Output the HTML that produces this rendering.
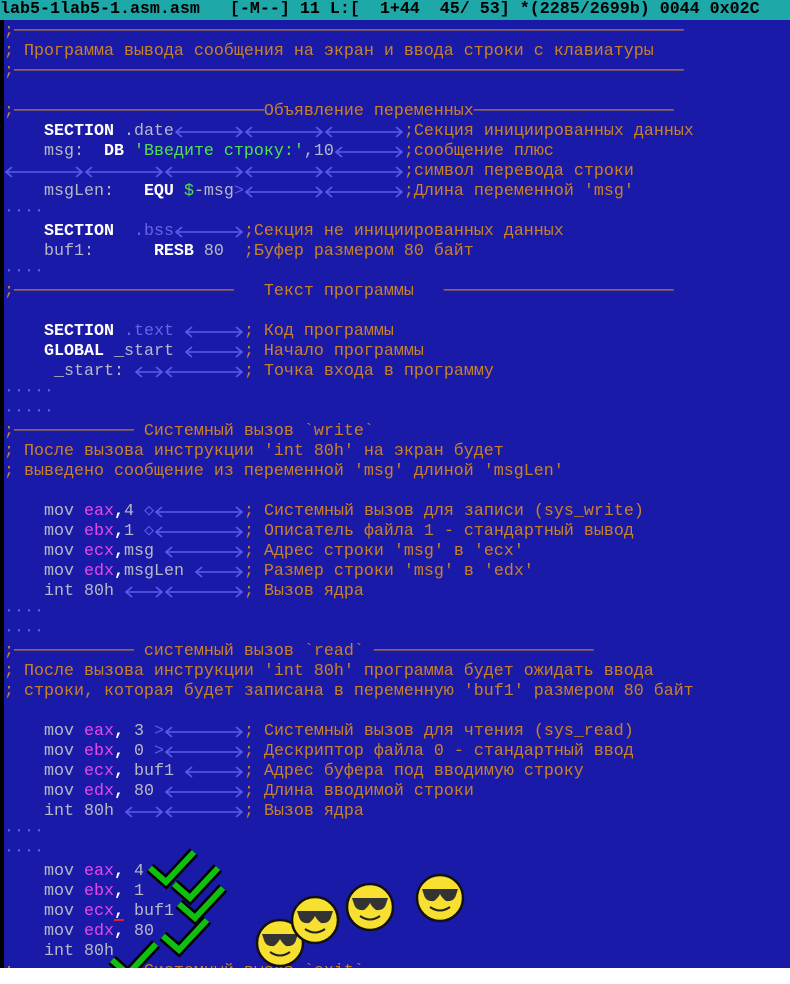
<!DOCTYPE html>
<html><head><meta charset="utf-8"><style>
body{margin:0;width:790px;height:984px;background:#fff;overflow:hidden;position:relative;font-family:"Liberation Mono","DejaVu Sans Mono","Noto Sans CJK SC",monospace;font-size:16.67px}
#blue{position:absolute;left:0;top:20px;width:790px;height:948px;background:#1a1aa8}
#strip{position:absolute;left:0;top:20px;width:4px;height:948px;background:#000}
#hdr{position:absolute;left:0;top:0;width:790px;height:20px;background:#1ea8a8;color:#000;line-height:20px;white-space:pre;font-weight:bold}
.r{position:absolute;left:4px;height:20px;line-height:20px;white-space:pre;color:#b8b8c8;margin-top:2px}
.c{color:#c8802a}
.w{color:#fff;font-weight:bold}
.g{color:#50e050}
.m{color:#e848e8}
.b{color:#6464e8}
.d{color:#5a5af0}
i.t{display:inline-block;height:20px;vertical-align:top}
#clip{position:absolute;left:0;top:0;width:790px;height:968px;overflow:hidden}
</style></head><body>
<div id="clip">
<div id="blue"></div><div id="strip"></div>
<div id="hdr">lab5-1lab5-1.asm.asm   [-M--] 11 L:[  1+44  45/ 53] *(2285/2699b) 0044 0x02C</div>
<div class="r c" style="top:20px">;───────────────────────────────────────────────────────────────────</div>
<div class="r c" style="top:40px">; Программа вывода сообщения на экран и ввода строки с клавиатуры</div>
<div class="r c" style="top:60px">;───────────────────────────────────────────────────────────────────</div>
<div class="r c" style="top:100px">;─────────────────────────Объявление переменных────────────────────</div>
<div class="r" style="top:120px">    <span class="w">SECTION</span> .date<i class="t" data-w="7"></i><i class="t" data-w="8"></i><i class="t" data-w="8"></i><span class="c">;Секция инициированных данных</span></div>
<div class="r" style="top:140px">    msg:  <span class="w">DB</span> <span class="g">'Введите строку:'</span>,10<i class="t" data-w="7"></i><span class="c">;сообщение плюс</span></div>
<div class="r" style="top:160px"><i class="t" data-w="8"></i><i class="t" data-w="8"></i><i class="t" data-w="8"></i><i class="t" data-w="8"></i><i class="t" data-w="8"></i><span class="c">;символ перевода строки</span></div>
<div class="r" style="top:180px">    msgLen:   <span class="w">EQU</span> <span class="g">$</span>-msg<span class="d">&gt;</span><i class="t" data-w="8"></i><i class="t" data-w="8"></i><span class="c">;Длина переменной 'msg'</span></div>
<div class="r d" style="top:200px">····</div>
<div class="r" style="top:220px">    <span class="w">SECTION</span>  <span class="b">.bss</span><i class="t" data-w="7"></i><span class="c">;Секция не инициированных данных</span></div>
<div class="r" style="top:240px">    buf1:      <span class="w">RESB</span> 80  <span class="c">;Буфер размером 80 байт</span></div>
<div class="r d" style="top:260px">····</div>
<div class="r c" style="top:280px">;──────────────────────   Текст программы   ───────────────────────</div>
<div class="r" style="top:320px">    <span class="w">SECTION</span> <span class="b">.text</span> <i class="t" data-w="6"></i><span class="c">; Код программы</span></div>
<div class="r" style="top:340px">    <span class="w">GLOBAL</span> _start <i class="t" data-w="6"></i><span class="c">; Начало программы</span></div>
<div class="r" style="top:360px">     _start: <i class="t" data-w="3"></i><i class="t" data-w="8"></i><span class="c">; Точка входа в программу</span></div>
<div class="r d" style="top:380px">·····</div>
<div class="r d" style="top:400px">·····</div>
<div class="r c" style="top:420px">;──────────── Системный вызов `write`</div>
<div class="r c" style="top:440px">; После вызова инструкции 'int 80h' на экран будет</div>
<div class="r c" style="top:460px">; выведено сообщение из переменной 'msg' длиной 'msgLen'</div>
<div class="r" style="top:500px">    mov <span class="m">eax</span><span class="w">,</span>4 <span class="d">◇</span><i class="t" data-w="9"></i><span class="c">; Системный вызов для записи (sys_write)</span></div>
<div class="r" style="top:520px">    mov <span class="m">ebx</span><span class="w">,</span>1 <span class="d">◇</span><i class="t" data-w="9"></i><span class="c">; Описатель файла 1 - стандартный вывод</span></div>
<div class="r" style="top:540px">    mov <span class="m">ecx</span><span class="w">,</span>msg <i class="t" data-w="8"></i><span class="c">; Адрес строки 'msg' в 'ecx'</span></div>
<div class="r" style="top:560px">    mov <span class="m">edx</span><span class="w">,</span>msgLen <i class="t" data-w="5"></i><span class="c">; Размер строки 'msg' в 'edx'</span></div>
<div class="r" style="top:580px">    int 80h <i class="t" data-w="4"></i><i class="t" data-w="8"></i><span class="c">; Вызов ядра</span></div>
<div class="r d" style="top:600px">····</div>
<div class="r d" style="top:620px">····</div>
<div class="r c" style="top:640px">;──────────── системный вызов `read` ──────────────────────</div>
<div class="r c" style="top:660px">; После вызова инструкции 'int 80h' программа будет ожидать ввода</div>
<div class="r c" style="top:680px">; строки, которая будет записана в переменную 'buf1' размером 80 байт</div>
<div class="r" style="top:720px">    mov <span class="m">eax</span><span class="w">,</span> 3 <span class="d">&gt;</span><i class="t" data-w="8"></i><span class="c">; Системный вызов для чтения (sys_read)</span></div>
<div class="r" style="top:740px">    mov <span class="m">ebx</span><span class="w">,</span> 0 <span class="d">&gt;</span><i class="t" data-w="8"></i><span class="c">; Дескриптор файла 0 - стандартный ввод</span></div>
<div class="r" style="top:760px">    mov <span class="m">ecx</span><span class="w">,</span> buf1 <i class="t" data-w="6"></i><span class="c">; Адрес буфера под вводимую строку</span></div>
<div class="r" style="top:780px">    mov <span class="m">edx</span><span class="w">,</span> 80 <i class="t" data-w="8"></i><span class="c">; Длина вводимой строки</span></div>
<div class="r" style="top:800px">    int 80h <i class="t" data-w="4"></i><i class="t" data-w="8"></i><span class="c">; Вызов ядра</span></div>
<div class="r d" style="top:820px">····</div>
<div class="r d" style="top:840px">····</div>
<div class="r" style="top:860px">    mov <span class="m">eax</span><span class="w">,</span> 4</div>
<div class="r" style="top:880px">    mov <span class="m">ebx</span><span class="w">,</span> 1</div>
<div class="r" style="top:900px">    mov <span class="m">ecx</span><span class="w">,</span> buf1</div>
<div class="r" style="top:920px">    mov <span class="m">edx</span><span class="w">,</span> 80</div>
<div class="r" style="top:940px">    int 80h</div>
<div class="r c" style="top:960px">;──────────── Системный вызов `exit`</div>
<div style="position:absolute;left:114px;top:919px;width:10px;height:2px;background:#e02020"></div>
<svg style="position:absolute;left:0;top:0" width="790" height="984">
<defs>
<g id="ck"><path d="M0 20 L16 34 L44 4" fill="none" stroke="#000" stroke-width="11" stroke-linejoin="miter"/><path d="M0 20 L16 34 L44 4" fill="none" stroke="#10c010" stroke-width="6"/></g>
<g id="sm"><circle cx="0" cy="0" r="23" fill="#f8e030" stroke="#111" stroke-width="2.5"/><path d="M-18 -9 L18 -9 L16 -3 Q14 4 6 3 Q2 0 0 -4 Q-2 0 -6 3 Q-14 4 -16 -3 Z" fill="#333"/><path d="M-10 9 Q0 16 10 9" fill="none" stroke="#222" stroke-width="2"/></g>
</defs>
<use href="#sm" x="280" y="943"/><use href="#sm" x="315" y="920"/><use href="#sm" x="370" y="907"/><use href="#sm" x="440" y="898"/>
<use href="#ck" x="150" y="848"/><use href="#ck" x="174" y="864"/><use href="#ck" x="179" y="884"/><use href="#ck" x="163" y="916"/><use href="#ck" x="112" y="940"/>
</svg>
</div>
<script>
document.querySelectorAll('i.t').forEach(function(e){var w=+e.getAttribute('data-w')*10;e.style.width=w+'px';
e.innerHTML='<svg width="'+w+'" height="20" style="display:block"><path d="M8 5 L2 10 L8 15 M2 10 H'+(w-2)+' M'+(w-8)+' 5 L'+(w-2)+' 10 L'+(w-8)+' 15" fill="none" stroke="#5a5af0" stroke-width="1.6"/></svg>';});
</script>
</body></html>
